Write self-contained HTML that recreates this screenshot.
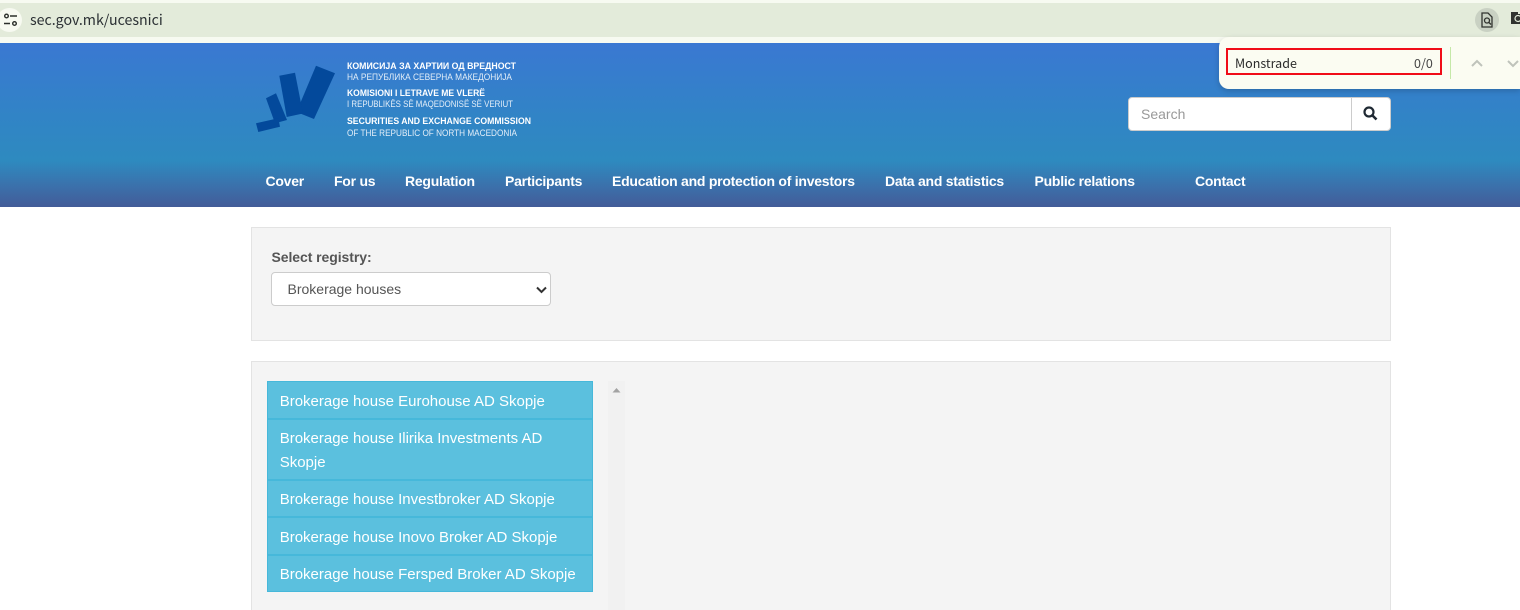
<!DOCTYPE html>
<html><head><meta charset="utf-8"><style>
html,body{margin:0;padding:0;background:#fff;width:1520px;height:610px;overflow:hidden}
body{font-family:"Liberation Sans",sans-serif;position:relative}
.a{position:absolute;white-space:nowrap}
.nav{top:173px;font-size:14px;font-weight:bold;color:#fff;line-height:16px;letter-spacing:-.25px}
.item{position:absolute;left:267px;width:326px;background:#5bc0de;border:1px solid #46b8da;box-sizing:border-box;color:#fff;font-size:15px;line-height:24px;padding:7px 12px 0 11.700px}
.sg{font-family:"Noto Sans CJK SC","Liberation Sans",sans-serif}
</style></head><body>
<div class="a" style="left:0;top:0;width:1520px;height:43px;background:#f7faf1"></div>
<div class="a" style="left:0;top:3px;width:1520px;height:34px;background:#e3ebda"></div>
<div class="a" style="left:-3px;top:8px;width:25px;height:24px;border-radius:50%;background:#f7faf1"></div>
<svg class="a" style="left:3px;top:13px" width="16" height="14" viewBox="0 0 16 14" fill="none" stroke="#2b2f2b" stroke-width="1.4"><circle cx="3.5" cy="3" r="1.8"/><path d="M7 3h7M1 10.500h6"/><circle cx="11.500" cy="10.500" r="1.800"/></svg>
<div class="a sg" style="left:30px;top:11px;font-size:14.200px;line-height:18px;color:#2a2f33">sec.gov.mk/ucesnici</div>
<div class="a" style="left:1475px;top:8px;width:24px;height:24px;border-radius:50%;background:#c9d1c3"></div>
<svg class="a" style="left:1480px;top:12px" width="14" height="16" viewBox="0 0 14 16" fill="none" stroke="#30332f" stroke-width="1.300"><path d="M2 1h6l4 4v10H2z"/><circle cx="7" cy="8.500" r="2.500"/><path d="M9 10.500l2 2"/></svg>
<svg class="a" style="left:1511px;top:11px" width="9" height="15" viewBox="0 0 9 15"><path d="M0 1h7v2h2v10H0z" fill="#30332f"/><circle cx="7" cy="7.500" r="3" fill="none" stroke="#e3ebda" stroke-width="1.200"/></svg>

<div class="a" style="left:0;top:43px;width:1520px;height:164px;background:linear-gradient(180deg,#3a78d2 0%,#3184c6 45%,#2e8abf 72%,#3a73ad 86%,#435c98 100%)"></div>
<svg class="a" style="left:250px;top:55px" width="300" height="90" viewBox="250 55 300 90">
<path d="M316 65.700L335 73.300L314 119L296.500 112Z" fill="#03499b"/>
<path d="M279.300 75.700L295 72.700L303 113.500L286.700 117Z" fill="#03499b"/>
<path d="M266 98.300L276 93.300L287 120L275 123.300Z" fill="#03499b"/>
<path d="M256 123.300L278.300 118.300L280 126.700L258.300 132Z" fill="#03499b"/>
<g font-family="'Liberation Sans',sans-serif" font-size="9" fill="#fff">
<text x="347" y="69" font-weight="bold" textLength="169" lengthAdjust="spacingAndGlyphs">КОМИСИЈА ЗА ХАРТИИ ОД ВРЕДНОСТ</text>
<text x="347" y="80" fill="#e3eef8" textLength="165" lengthAdjust="spacingAndGlyphs">НА РЕПУБЛИКА СЕВЕРНА МАКЕДОНИЈА</text>
<text x="347" y="96" font-weight="bold" textLength="138" lengthAdjust="spacingAndGlyphs">KOMISIONI I LETRAVE ME VLERË</text>
<text x="347" y="107" fill="#e3eef8" textLength="166" lengthAdjust="spacingAndGlyphs">I REPUBLIKËS SË MAQEDONISË SË VERIUT</text>
<text x="347" y="124" font-weight="bold" textLength="184" lengthAdjust="spacingAndGlyphs">SECURITIES AND EXCHANGE COMMISSION</text>
<text x="347" y="136" fill="#e3eef8" textLength="170" lengthAdjust="spacingAndGlyphs">OF THE REPUBLIC OF NORTH MACEDONIA</text>
</g></svg>

<div class="a" style="left:1128px;top:97px;width:263px;height:34px;background:#fff;border:1px solid #ccc;border-radius:4px;box-sizing:border-box"></div>
<div class="a" style="left:1351px;top:98px;width:1px;height:32px;background:#ccc"></div>
<div class="a" style="left:1141px;top:106px;font-size:14px;line-height:16px;color:#999">Search</div>
<svg class="a" style="left:1363px;top:106px" width="15" height="15" viewBox="0 0 15 15" fill="none" stroke="#1f2933" stroke-width="2.200"><circle cx="6" cy="6" r="4.500"/><path d="M9.500 9.500l4 4" stroke-width="2.600"/></svg>

<div class="a" style="left:1219px;top:37px;width:301px;height:52px;background:#fbfcf2;border-radius:10px 0 0 10px;box-shadow:0 2px 6px rgba(0,0,0,.18)"></div>
<div class="a" style="left:1226px;top:48px;width:216px;height:27px;border:2px solid #f00c18;box-sizing:border-box"></div>
<div class="a sg" style="left:1235px;top:55px;font-size:12.500px;line-height:16px;color:#2b2b2b">Monstrade</div>
<div class="a sg" style="left:1414px;top:55px;font-size:12.500px;line-height:16px;color:#444">0/0</div>
<div class="a" style="left:1450px;top:47px;width:1px;height:32px;background:#c5e8a8"></div>
<svg class="a" style="left:1470px;top:58px" width="50" height="10" viewBox="0 0 50 10" fill="none" stroke="#bfc3bb" stroke-width="2"><path d="M2 8l5-5 5 5M38 3l5 5 5-5"/></svg>

<div class="a nav" style="left:265.500px">Cover</div>
<div class="a nav" style="left:334px">For us</div>
<div class="a nav" style="left:405px">Regulation</div>
<div class="a nav" style="left:505px">Participants</div>
<div class="a nav" style="left:612px">Education and protection of investors</div>
<div class="a nav" style="left:885px">Data and statistics</div>
<div class="a nav" style="left:1034.500px">Public relations</div>
<div class="a nav" style="left:1195px">Contact</div>

<div class="a" style="left:251px;top:227px;width:1140px;height:114px;background:#f4f4f4;border:1px solid #e3e3e3;box-sizing:border-box"></div>
<div class="a" style="left:271.500px;top:249px;font-size:14px;font-weight:bold;line-height:16px;color:#555;letter-spacing:-.07px">Select registry:</div>
<div class="a" style="left:271px;top:272px;width:280px;height:34px;background:#fff;border:1px solid #ccc;border-radius:4px;box-sizing:border-box"></div>
<div class="a" style="left:287.500px;top:281px;font-size:14px;line-height:16px;color:#555">Brokerage houses</div>
<svg class="a" style="left:536px;top:286px" width="11" height="8" viewBox="0 0 11 8" fill="none" stroke="#333" stroke-width="2"><path d="M1 1.500l4.500 4.500 4.500-4.500"/></svg>

<div class="a" style="left:251px;top:361px;width:1140px;height:260px;background:#f4f4f4;border:1px solid #e3e3e3;box-sizing:border-box"></div>
<div class="a" style="left:608px;top:381px;width:17px;height:229px;background:#f1f1f1"></div>
<svg class="a" style="left:612px;top:387px" width="9" height="6" viewBox="0 0 9 6"><path d="M4.500 1L8.500 5.500H.5Z" fill="#a3a3a3"/></svg>

<div class="item" style="top:381px;height:38px;padding-top:8px;white-space:nowrap">Brokerage house Eurohouse AD Skopje</div>
<div class="item" style="top:419px;height:61px">Brokerage house Ilirika Investments AD<br>Skopje</div>
<div class="item" style="top:480px;height:37px;white-space:nowrap">Brokerage house Investbroker AD Skopje</div>
<div class="item" style="top:517px;height:38px;padding-top:8px;white-space:nowrap">Brokerage house Inovo Broker AD Skopje</div>
<div class="item" style="top:555px;height:37px;white-space:nowrap">Brokerage house Fersped Broker AD Skopje</div>
</body></html>
